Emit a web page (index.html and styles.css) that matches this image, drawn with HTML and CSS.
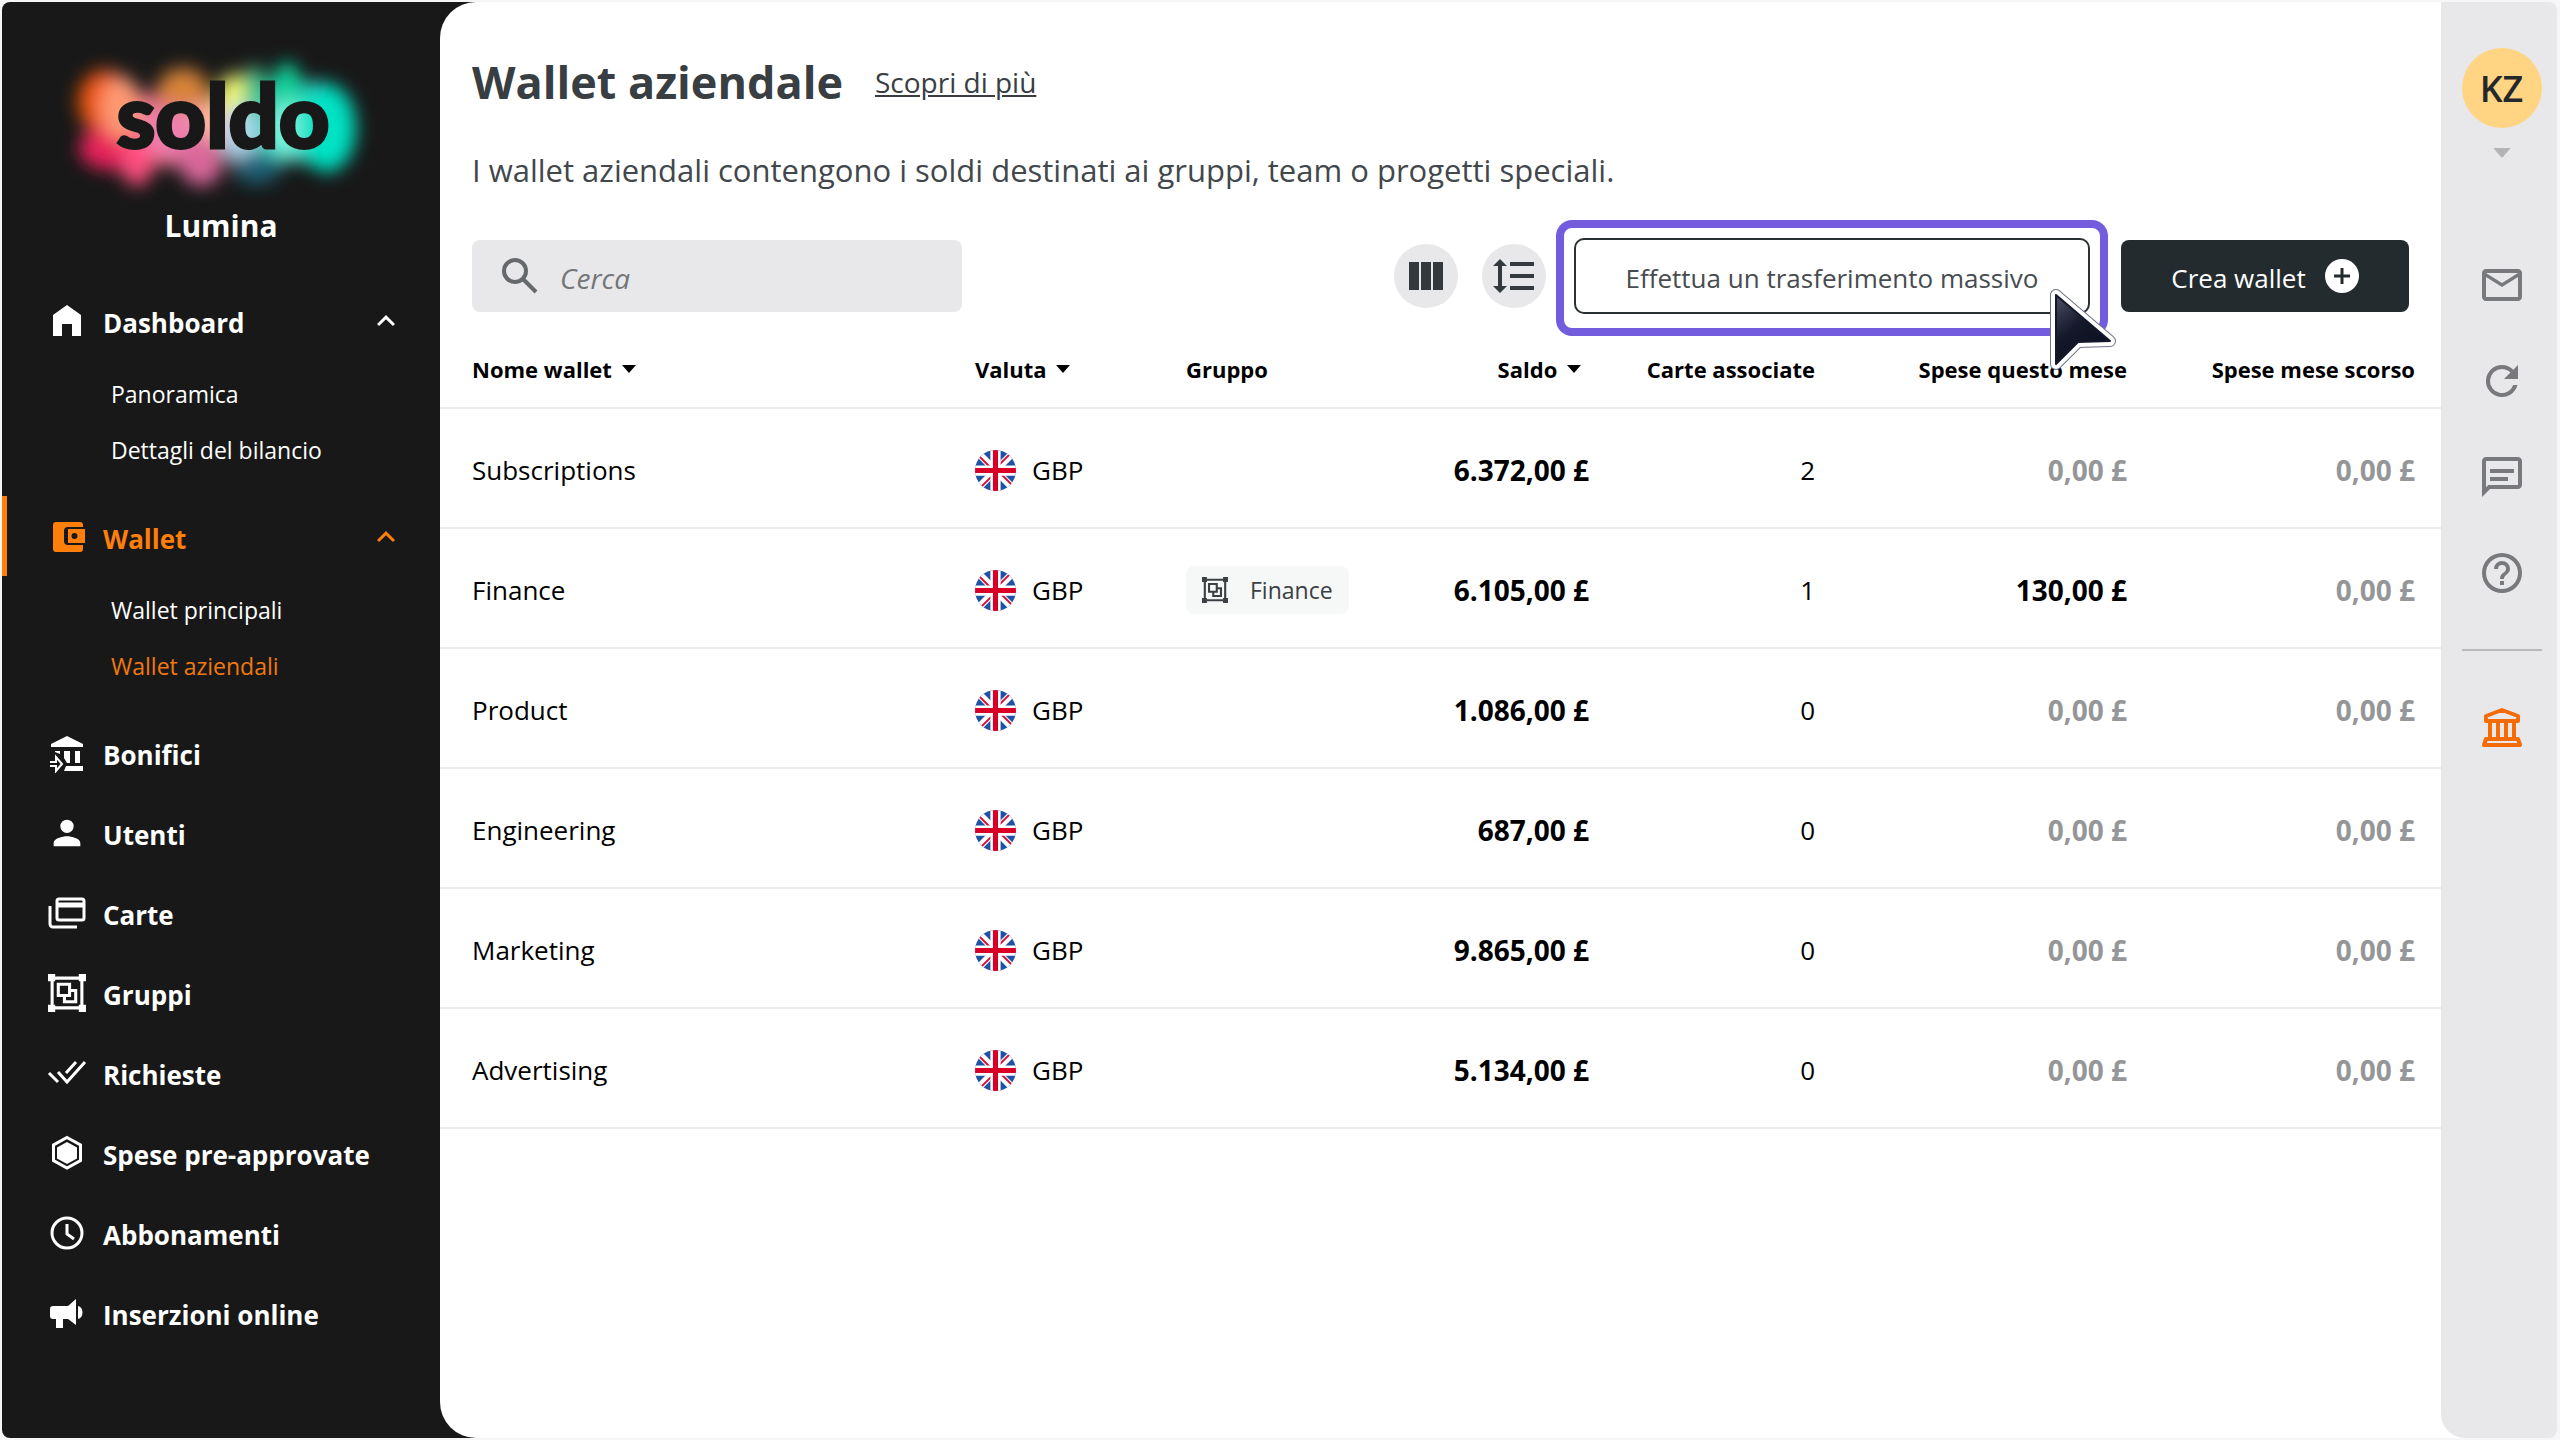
FILE: index.html
```
<!DOCTYPE html>
<html lang="it">
<head>
  <meta charset="UTF-8" />
  <meta name="viewport" content="width=device-width, initial-scale=1.0" />
  <title>Wallet aziendale</title>
  <link rel="stylesheet" href="styles.css">
</head>
<body>
  <!-- shared icons -->
  <svg class="sprite" aria-hidden="true">
    <symbol id="up" viewBox="0 0 24 24"><path d="M12 8l-6 6 1.4 1.4L12 10.8l4.6 4.6L18 14z"/></symbol>
    <symbol id="caret" viewBox="0 0 14 8"><path d="M0 0h14L7 8z"/></symbol>
    <symbol id="group" viewBox="0 0 37 37">
      <path d="M4 4h29v29H4z" fill="none" stroke="currentColor" stroke-width="3"/>
      <path d="M0 0h7v7H0zM30 0h7v7h-7zM0 30h7v7H0zM30 30h7v7h-7z"/>
      <path d="M10 10h11v11H10zM21 16h6v11H16v-6" fill="none" stroke="currentColor" stroke-width="3"/>
    </symbol>
    <symbol id="gb" viewBox="0 0 40 40">
      <clipPath id="round"><circle cx="20" cy="20" r="20"/></clipPath>
      <g clip-path="url(#round)">
        <path fill="#1f51a5" d="M0 0h40v40H0z"/>
        <path stroke="#fff" stroke-width="7" d="M3 3l34 34M37 3L3 37"/>
        <path stroke="#d80f35" stroke-width="2" d="M4 6l12 12M36 34L24 22M34 4L22 16M6 36l12-12"/>
        <path stroke="#fff" stroke-width="10" d="M20 0v40M0 20h40"/>
        <path stroke="#d80027" stroke-width="5" d="M20 0v40M0 20h40"/>
      </g>
    </symbol>
  </svg>

  <div class="app">
    <aside class="sidebar">
      <div class="brand">
        <svg class="logo" viewBox="0 0 320 160" role="img" aria-label="soldo">
          <defs>
            <filter id="soft" x="-30%" y="-30%" width="160%" height="160%"><feGaussianBlur stdDeviation="9"/></filter>
          </defs>
          <g filter="url(#soft)">
            <rect x="30" y="52" width="130" height="72" rx="24" fill="#e8708f"/>
            <rect x="160" y="40" width="120" height="80" rx="20" fill="#2fc9bd"/>
            <ellipse cx="44" cy="60" rx="27" ry="32" fill="#f0560f"/>
            <ellipse cx="50" cy="106" rx="32" ry="22" fill="#e8235c"/>
            <ellipse cx="76" cy="120" rx="16" ry="24" fill="#ff4f80"/>
            <ellipse cx="60" cy="66" rx="20" ry="32" fill="#ff9a74"/>
            <ellipse cx="122" cy="50" rx="26" ry="24" fill="#d98338"/>
            <ellipse cx="116" cy="90" rx="36" ry="24" fill="#ee7fae"/>
            <ellipse cx="140" cy="118" rx="22" ry="26" fill="#d9689a"/>
            <ellipse cx="150" cy="78" rx="16" ry="20" fill="#ffb29a"/>
            <ellipse cx="174" cy="54" rx="18" ry="22" fill="#f4fa70"/>
            <ellipse cx="194" cy="48" rx="12" ry="24" fill="#3cc08a"/>
            <ellipse cx="178" cy="92" rx="18" ry="30" fill="#b4d8ec"/>
            <ellipse cx="196" cy="126" rx="24" ry="16" fill="#1c5f74"/>
            <ellipse cx="226" cy="48" rx="14" ry="28" fill="#0ad69c"/>
            <ellipse cx="226" cy="88" rx="18" ry="28" fill="#7bf5dd"/>
            <ellipse cx="266" cy="86" rx="29" ry="44" fill="#00e2c4"/>
          </g>
          <text x="162" y="106" class="logo-text">soldo</text>
        </svg>
        <div class="company">Lumina</div>
      </div>

      <nav class="menu">
        <a class="item" href="#">
          <svg class="icon" viewBox="0 0 40 40"><path d="M6 14L20 4l14 10v21H25V23H15v12H6z"/></svg>
          <span>Dashboard</span>
          <svg class="chevron"><use href="#up"/></svg>
        </a>
        <div class="submenu">
          <a href="#">Panoramica</a>
          <a href="#">Dettagli del bilancio</a>
        </div>
        <a class="item active" href="#">
          <svg class="icon" viewBox="0 0 40 40"><path d="M9 5h24a3 3 0 0 1 3 3v2H21a4 4 0 0 0-4 4v10a4 4 0 0 0 4 4h15v4a3 3 0 0 1-3 3H9a3 3 0 0 1-3-3V8a3 3 0 0 1 3-3z"/><path fill-rule="evenodd" d="M21 12h17v14H21zM27.500 16a3 3 0 1 0 0 6 3 3 0 0 0 0-6z"/></svg>
          <span>Wallet</span>
          <svg class="chevron"><use href="#up"/></svg>
        </a>
        <div class="submenu">
          <a href="#">Wallet principali</a>
          <a class="current" href="#">Wallet aziendali</a>
        </div>
        <a class="item" href="#">
          <svg class="icon" viewBox="0 0 40 40"><path d="M4 11L20 3l16 8v3H4zM17 18h6v12h-3l-3-5zM28 18h5v12h-5zM8 18h5v3L8 19zM19 33h17v5H17z"/><path d="M3 29h6v-5l6 7-6 7v-5H3" fill="none" stroke="currentColor" stroke-width="2"/></svg>
          <span>Bonifici</span>
        </a>
        <a class="item" href="#">
          <svg class="icon" viewBox="0 0 24 24"><path d="M12 12a4 4 0 1 0 0-8 4 4 0 0 0 0 8zm0 2c-2.700 0-8 1.300-8 4v2h16v-2c0-2.700-5.300-4-8-4z"/></svg>
          <span>Utenti</span>
        </a>
        <a class="item" href="#">
          <svg class="icon line" viewBox="0 0 40 40"><rect x="10" y="6" width="27" height="21" rx="2"/><path d="M10 12h27" stroke-width="5"/><path d="M3 13v18a3 3 0 0 0 3 3h24"/></svg>
          <span>Carte</span>
        </a>
        <a class="item" href="#">
          <svg class="icon" viewBox="-1 -1 39 39"><use href="#group" width="37" height="37"/></svg>
          <span>Gruppi</span>
        </a>
        <a class="item" href="#">
          <svg class="icon line" viewBox="0 0 40 40"><path d="M2 20l9 9M11 19l9 10L38 9M19 20L29 9"/></svg>
          <span>Richieste</span>
        </a>
        <a class="item" href="#">
          <svg class="icon" viewBox="0 0 40 40"><path d="M20 4.500l13.500 7.500v15.500L20 35 6.500 27.500V12z" fill="none" stroke="currentColor" stroke-width="3"/><path d="M20 9l10 5.500v11L20 31l-10-5.500v-11z"/></svg>
          <span>Spese pre-approvate</span>
        </a>
        <a class="item" href="#">
          <svg class="icon line" viewBox="0 0 40 40"><circle cx="20" cy="20" r="15"/><path d="M20 11v10l7 5"/></svg>
          <span>Abbonamenti</span>
        </a>
        <a class="item" href="#">
          <svg class="icon" viewBox="0 0 40 40"><path d="M6 13h15l8-7v26l-8-6h-5v9H9v-9H6a3 3 0 0 1-3-3v-7a3 3 0 0 1 3-3zM31 13c6 1 6 12 0 13z"/></svg>
          <span>Inserzioni online</span>
        </a>
      </nav>
    </aside>

    <main class="content">
      <header class="heading">
        <h1>Wallet aziendale</h1>
        <a href="#">Scopri di più</a>
      </header>
      <p class="intro">I wallet aziendali contengono i soldi destinati ai gruppi, team o progetti speciali.</p>

      <div class="toolbar">
        <label class="search">
          <svg viewBox="0 0 36 36"><circle cx="13" cy="13" r="11"/><path d="M21 21l13 13"/></svg>
          <input type="text" placeholder="Cerca" aria-label="Cerca">
        </label>
        <button class="round-btn" aria-label="Colonne">
          <svg viewBox="0 0 36 30"><path d="M1 1h10v28H1zM13 1h10v28H13zM25 1h10v28H25z"/></svg>
        </button>
        <button class="round-btn" aria-label="Altezza righe">
          <svg class="wide" viewBox="0 0 42 36"><path d="M7 1l7 7H9v20h5l-7 7-7-7h5V8H0zM17 4h24v4H17zM17 16h24v4H17zM17 28h24v4H17z"/></svg>
        </button>
        <div class="spotlight">
          <button class="transfer-btn">Effettua un trasferimento massivo</button>
          <svg class="cursor" viewBox="0 0 68 84">
            <defs>
              <linearGradient id="ink" x1="0" y1="0" x2="0.600" y2="1">
                <stop offset="0" stop-color="#4d5068"/>
                <stop offset="0.500" stop-color="#14182a"/>
                <stop offset="1" stop-color="#0b0e1c"/>
              </linearGradient>
            </defs>
            <path class="edge" d="M7 7v69l22-22 32-1z"/>
            <path class="rim" d="M7 7v69l22-22 32-1z"/>
            <path class="fill" d="M7 7v69l22-22 32-1z" fill="url(#ink)"/>
          </svg>
        </div>
        <button class="create-btn">
          <span>Crea wallet</span>
          <svg viewBox="0 0 34 34"><circle cx="17" cy="17" r="17"/><path d="M17 9v16M9 17h16"/></svg>
        </button>
      </div>

      <table class="wallets">
        <thead>
          <tr>
            <th class="name"><button>Nome wallet <svg><use href="#caret"/></svg></button></th>
            <th class="currency"><button>Valuta <svg><use href="#caret"/></svg></button></th>
            <th class="team">Gruppo</th>
            <th class="balance"><button>Saldo <svg><use href="#caret"/></svg></button></th>
            <th class="cards">Carte associate</th>
            <th class="month">Spese questo mese</th>
            <th class="last">Spese mese scorso</th>
          </tr>
        </thead>
        <tbody>
          <tr>
            <td class="name">Subscriptions</td>
            <td><span class="flag"><svg><use href="#gb"/></svg>GBP</span></td>
            <td></td>
            <td class="amount">6.372,00 £</td>
            <td class="num">2</td>
            <td class="amount zero">0,00 £</td>
            <td class="amount zero last">0,00 £</td>
          </tr>
          <tr>
            <td class="name">Finance</td>
            <td><span class="flag"><svg><use href="#gb"/></svg>GBP</span></td>
            <td><span class="chip"><svg><use href="#group"/></svg>Finance</span></td>
            <td class="amount">6.105,00 £</td>
            <td class="num">1</td>
            <td class="amount">130,00 £</td>
            <td class="amount zero last">0,00 £</td>
          </tr>
          <tr>
            <td class="name">Product</td>
            <td><span class="flag"><svg><use href="#gb"/></svg>GBP</span></td>
            <td></td>
            <td class="amount">1.086,00 £</td>
            <td class="num">0</td>
            <td class="amount zero">0,00 £</td>
            <td class="amount zero last">0,00 £</td>
          </tr>
          <tr>
            <td class="name">Engineering</td>
            <td><span class="flag"><svg><use href="#gb"/></svg>GBP</span></td>
            <td></td>
            <td class="amount">687,00 £</td>
            <td class="num">0</td>
            <td class="amount zero">0,00 £</td>
            <td class="amount zero last">0,00 £</td>
          </tr>
          <tr>
            <td class="name">Marketing</td>
            <td><span class="flag"><svg><use href="#gb"/></svg>GBP</span></td>
            <td></td>
            <td class="amount">9.865,00 £</td>
            <td class="num">0</td>
            <td class="amount zero">0,00 £</td>
            <td class="amount zero last">0,00 £</td>
          </tr>
          <tr>
            <td class="name">Advertising</td>
            <td><span class="flag"><svg><use href="#gb"/></svg>GBP</span></td>
            <td></td>
            <td class="amount">5.134,00 £</td>
            <td class="num">0</td>
            <td class="amount zero">0,00 £</td>
            <td class="amount zero last">0,00 £</td>
          </tr>
        </tbody>
      </table>
    </main>

    <aside class="rail">
      <button class="user" aria-label="Profilo">
        <span class="avatar">KZ</span>
        <svg><use href="#caret"/></svg>
      </button>
      <a href="#" aria-label="Messaggi"><svg viewBox="0 0 24 24"><path d="M22 6c0-1.100-.9-2-2-2H4c-1.100 0-2 .9-2 2v12c0 1.100.9 2 2 2h16c1.100 0 2-.9 2-2V6zm-2 0l-8 5-8-5h16zm0 12H4V8l8 5 8-5v10z"/></svg></a>
      <a href="#" aria-label="Aggiorna"><svg viewBox="0 0 24 24"><path d="M17.650 6.350A7.960 7.960 0 0 0 12 4a8 8 0 1 0 7.730 10h-2.080A6 6 0 1 1 12 6c1.660 0 3.140.69 4.220 1.780L13 11h7V4z"/></svg></a>
      <a href="#" aria-label="Chat"><svg viewBox="0 0 24 24"><path d="M4 4h16v12H5.170L4 17.170V4m0-2c-1.100 0-2 .9-2 2v18l4-4h14c1.100 0 2-.9 2-2V4c0-1.100-.9-2-2-2H4zm2 10h9v2H6zm0-4h12v2H6z"/></svg></a>
      <a href="#" aria-label="Aiuto"><svg viewBox="0 0 24 24"><path d="M11 18h2v-2h-2v2zm1-16a10 10 0 1 0 0 20 10 10 0 0 0 0-20zm0 18a8 8 0 1 1 0-16 8 8 0 0 1 0 16zm0-14a4 4 0 0 0-4 4h2a2 2 0 1 1 4 0c0 2-3 1.750-3 5h2c0-2.250 3-2.500 3-5a4 4 0 0 0-4-4z"/></svg></a>
      <hr>
      <a class="bank" href="#" aria-label="Banca"><svg viewBox="0 0 48 48"><path d="M8 12l16-6 16 6v5H8zM12 19v14M20 19v14M28 19v14M36 19v14M8 35h32l2 6H6z"/></svg></a>
    </aside>
  </div>
</body>
</html>
```
FILE: styles.css
```
* {
  box-sizing: border-box;
}
body {
  margin: 0;
  padding: 2px 3px 2px 2px;
  background: #f6f6f6;
  color: #000;
  font-family: "Open Sans", "Noto Sans", sans-serif;
  font-size: 26px;
  line-height: 36px;
}
a {
  color: inherit;
  text-decoration: none;
}
button {
  font: inherit;
  color: inherit;
  background: none;
  border: none;
  padding: 0;
  cursor: pointer;
}
svg {
  fill: currentColor;
  flex: none;
}
.sprite {
  position: absolute;
  width: 0;
  height: 0;
}
.app {
  display: flex;
  min-height: calc(100vh - 4px);
  background: linear-gradient(to right, #181818 50%, #fff 50%);
  border-radius: 8px;
  overflow: hidden;
}

/* left menu */
.sidebar {
  width: 438px;
  flex: none;
  color: #fff;
}
.brand {
  display: flex;
  flex-direction: column;
  align-items: center;
  gap: 6px;
  height: 278px;
  padding-top: 40px;
}
.logo {
  width: 320px;
  height: 160px;
}
.logo-text {
  font-family: Lato, sans-serif;
  font-weight: 900;
  font-size: 88px;
  text-anchor: middle;
  fill: #181818;
  stroke: #181818;
  stroke-width: 3;
}
.company {
  font-size: 30px;
  font-weight: 700;
}
.item {
  display: flex;
  align-items: center;
  gap: 16px;
  height: 80px;
  padding: 2px 36px 0 45px;
  font-weight: 700;
}
.item span {
  flex: 1;
  padding-top: 4px;
}
.icon {
  width: 40px;
  height: 40px;
}
.icon.line {
  fill: none;
  stroke: currentColor;
  stroke-width: 3;
}
.chevron {
  width: 36px;
  height: 36px;
}
.active {
  color: #ff7f0a;
  background: linear-gradient(#ff7f0a, #ff7f0a) left / 5px 100% no-repeat;
}
.submenu {
  padding: 6px 0 18px 109px;
  font-size: 23px;
}
.submenu a {
  display: block;
  line-height: 56px;
}
.submenu .current {
  color: #f0780f;
}

/* page */
.content {
  flex: 1;
  background: #fff;
  border-radius: 36px 0 0 36px;
}
.heading {
  display: flex;
  align-items: center;
  gap: 32px;
  padding: 48px 32px 0;
  color: #383e42;
}
.heading h1 {
  margin: 0;
  font-size: 45px;
  line-height: 64px;
}
.heading a {
  font-size: 28px;
  text-decoration: underline;
}
.intro {
  margin: 0;
  padding: 36px 32px 0;
  font-size: 31px;
  line-height: 40px;
  color: #42474b;
}
.toolbar {
  display: flex;
  align-items: center;
  height: 120px;
  margin-top: 26px;
  padding: 0 32px;
}
.search {
  display: flex;
  align-items: center;
  gap: 22px;
  width: 490px;
  height: 72px;
  margin-right: auto;
  padding: 0 30px;
  background: #e8e8ea;
  border-radius: 8px;
}
.search svg {
  width: 36px;
  height: 36px;
  fill: none;
  stroke: #66696c;
  stroke-width: 4;
}
.search input {
  flex: 1;
  min-width: 0;
  padding: 4px 0 0;
  border: none;
  outline: none;
  background: none;
  font: inherit;
  font-size: 28px;
}
.search input::placeholder {
  color: #737578;
  font-style: italic;
}
.round-btn {
  display: flex;
  align-items: center;
  justify-content: center;
  width: 64px;
  height: 64px;
  margin-right: 24px;
  background: #e8e8ea;
  border-radius: 50%;
  color: #34393d;
}
.round-btn svg {
  width: 36px;
  height: 30px;
}
.round-btn .wide {
  width: 42px;
  height: 36px;
}
.spotlight {
  position: relative;
  padding: 10px 10px 14px;
  margin: 4px 13px 0 -14px;
  border: 8px solid #735cdd;
  border-radius: 16px;
}
.transfer-btn {
  display: block;
  width: 516px;
  height: 76px;
  padding-top: 4px;
  border: 2px solid #2b3033;
  border-radius: 10px;
  color: #474c50;
}
.cursor {
  position: absolute;
  left: 485px;
  top: 60px;
  width: 68px;
  height: 84px;
  stroke-linejoin: round;
}
.edge {
  stroke: #6f7284;
  stroke-width: 12;
}
.rim {
  stroke: #fff;
  stroke-width: 10;
}
.fill {
  stroke: #14182a;
  stroke-width: 2;
}
.create-btn {
  display: flex;
  align-items: center;
  justify-content: center;
  gap: 19px;
  width: 288px;
  height: 72px;
  background: #232b2e;
  border-radius: 8px;
  color: #fff;
}
.create-btn span {
  padding-top: 4px;
}
.create-btn svg {
  width: 34px;
  height: 34px;
}
.create-btn path {
  stroke: #232b2e;
  stroke-width: 3;
}

/* wallets table */
.wallets {
  width: 100%;
  table-layout: fixed;
  border-collapse: collapse;
}
.wallets th,
.wallets td {
  padding: 4px 0 0;
  border-bottom: 2px solid #ebecec;
  text-align: left;
}
.wallets th {
  height: 72px;
  padding: 0 0 6px;
  font-size: 22px;
  font-weight: 700;
}
.wallets td {
  height: 120px;
}
.wallets th svg {
  width: 14px;
  height: 8px;
  margin-left: 4px;
  vertical-align: 5px;
}
.wallets .name {
  padding-left: 32px;
}
.wallets .last {
  padding-right: 26px;
}
th.currency {
  width: 211px;
}
th.team {
  width: 203px;
}
th.balance {
  width: 200px;
}
th.cards {
  width: 226px;
}
th.month {
  width: 312px;
}
th.last {
  width: 314px;
}
.wallets .balance,
.wallets .cards,
.wallets .month,
.wallets .last,
.wallets .amount,
.wallets .num {
  text-align: right;
}
.wallets .balance {
  padding-right: 8px;
}
.amount {
  font-size: 28px;
  font-weight: 700;
}
.zero {
  color: #959697;
}
.flag {
  display: flex;
  align-items: center;
  gap: 16px;
}
.flag svg {
  width: 41px;
  height: 41px;
}
.chip {
  display: inline-flex;
  align-items: center;
  gap: 22px;
  height: 48px;
  padding: 0 16px;
  background: #f6f7f7;
  border-radius: 8px;
  color: #3c4043;
  font-size: 23px;
}
.chip svg {
  width: 26px;
  height: 26px;
}

/* right rail */
.rail {
  display: flex;
  flex-direction: column;
  align-items: center;
  width: 116px;
  flex: none;
  padding: 46px 0 0 5px;
  background: #e8e8ea;
  border-radius: 0 0 0 24px;
  color: #77797c;
}
.user {
  display: flex;
  flex-direction: column;
  align-items: center;
  gap: 20px;
  height: 189px;
}
.avatar {
  width: 80px;
  height: 80px;
  border-radius: 50%;
  background: #ffd583;
  color: #24282a;
  font-size: 36px;
  font-weight: 600;
  line-height: 82px;
}
.user svg {
  width: 20px;
  height: 10px;
  fill: #b3b3b5;
}
.rail a {
  display: flex;
  align-items: center;
  height: 96px;
}
.rail a svg {
  width: 48px;
  height: 48px;
}
.rail hr {
  width: 80px;
  height: 2px;
  margin: 28px 0 29px;
  border: none;
  background: #b8b9bb;
}
.rail .bank svg {
  fill: none;
  stroke: #f56b05;
  stroke-width: 4;
  stroke-linejoin: round;
}
```
